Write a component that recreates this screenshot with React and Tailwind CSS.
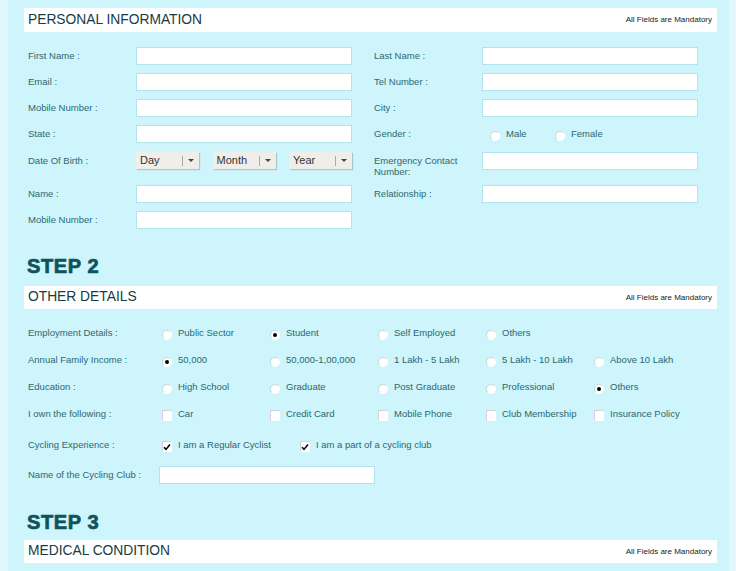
const leftFields = [
  'First Name :',
  'Email :',
  'Mobile Number :',
  'State :',
]
const rightFields = ['Last Name :', 'Tel Number :', 'City :']

function Header({ title, className = 'h-[23px]' }) {
  return (
    <div className={`flex items-center justify-between bg-white pl-[4px] pr-[5px] ${className}`}>
      <span className="text-[13.8px] text-[#173c44]">{title}</span>
      <span className="text-[8px] text-[#222]">All Fields are Mandatory</span>
    </div>
  )
}

function Step({ n, className }) {
  return (
    <div
      className={`h-[24px] pl-[3px] text-[20px] leading-[24px] font-bold tracking-[0.6px] text-[#0f5361] [-webkit-text-stroke:0.7px_#0f5361] ${className}`}
    >
      STEP {n}
    </div>
  )
}

function Input({ className = 'w-[216px]' }) {
  return <div className={`h-[18px] border border-[#b4e3eb] bg-white ${className}`} />
}

function Label({ children, className = 'w-[108px]' }) {
  return <div className={`shrink-0 text-[9.5px] leading-[18px] text-[#2f6870] ${className}`}>{children}</div>
}

function Radio({ checked }) {
  return (
    <span className="relative mt-[3px] flex h-[10px] w-[10px] shrink-0 items-center justify-center rounded-full border border-[#d4d4d4] border-r-white border-b-white bg-white">
      {checked && <span className="h-[4px] w-[4px] rounded-full bg-black" />}
    </span>
  )
}

function Check({ checked }) {
  return (
    <span className="mt-[3px] flex h-[11px] w-[10px] shrink-0 items-center justify-center border border-[#d2d2d2] border-r-white border-b-white bg-white">
      {checked && (
        <svg width="8" height="8" viewBox="0 0 8 8">
          <path d="M1 4.2 L3 6.4 L7 1.6" fill="none" stroke="#000" strokeWidth="1.6" />
        </svg>
      )}
    </span>
  )
}

function Option({ label, checked, box, className = 'w-[108px]' }) {
  return (
    <div className={`flex items-center gap-[6px] ${className}`}>
      {box ? <Check checked={checked} /> : <Radio checked={checked} />}
      <span className="text-[9.5px] text-[#2b6870]">{label}</span>
    </div>
  )
}

function Select({ label }) {
  return (
    <div className="flex h-[17px] w-[63px] items-center bg-[#efeee8] shadow-[1px_1px_1px_rgba(0,0,0,0.18)]">
      <span className="w-[46px] pl-[4px] text-[11px] text-[#333]">{label}</span>
      <span className="h-[10px] w-px bg-[#a9a9a9]" />
      <span className="flex flex-1 justify-center">
        <span className="h-0 w-0 border-x-[3px] border-t-[3px] border-x-transparent border-t-[#444]" />
      </span>
    </div>
  )
}

function OptionRow({ label, options, checked, box, className = 'mt-[9px]' }) {
  return (
    <div className={`flex h-[18px] items-center ${className}`}>
      <Label className="w-[134px]">{label}</Label>
      {options.map((o, i) => (
        <Option key={o} label={o} checked={i === checked} box={box} />
      ))}
    </div>
  )
}

export default function App() {
  return (
    <div className="flex min-h-[571px] w-full bg-[#e1f8fb] font-['Liberation_Sans',Arial,sans-serif]">
      <div className="ml-[8px] w-[721px] bg-[#cdf5fb] pt-[8px] pr-[12px] pb-[20px] pl-[16px]">
        <Header title="PERSONAL INFORMATION" className="h-[24px]" />

        <div className="pl-[4px]">
          {leftFields.map((f, i) => (
            <div key={f} className={`flex h-[18px] ${i === 0 ? 'mt-[15px]' : 'mt-[8px]'}`}>
              <Label>{f}</Label>
              <Input />
              <div className="w-[22px]" />
              <Label>{rightFields[i] ?? 'Gender :'}</Label>
              {rightFields[i] ? (
                <Input />
              ) : (
                <div className="flex items-center pl-[8px]">
                  <Option label="Male" className="w-[65px]" />
                  <Option label="Female" className="w-[80px]" />
                </div>
              )}
            </div>
          ))}

          <div className="mt-[9px] flex h-[25px] items-start">
            <Label>Date Of Birth :</Label>
            <div className="flex w-[216px] justify-between">
              <Select label="Day" />
              <Select label="Month" />
              <Select label="Year" />
            </div>
            <div className="w-[22px]" />
            <div className="w-[108px] shrink-0 pt-[3px] text-[9.5px] leading-[11px] text-[#2f6870]">
              Emergency Contact
              <br />
              Number:
            </div>
            <Input />
          </div>

          <div className="mt-[8px] flex h-[18px]">
            <Label>Name :</Label>
            <Input />
            <div className="w-[22px]" />
            <Label>Relationship :</Label>
            <Input />
          </div>

          <div className="mt-[8px] flex h-[18px]">
            <Label>Mobile Number :</Label>
            <Input />
          </div>
        </div>

        <Step n={2} className="mt-[25px]" />
        <div className="mt-[8px]">
          <Header title="OTHER DETAILS" />
        </div>

        <div className="pl-[4px]">
          <OptionRow
            className="mt-[15px]"
            label="Employment Details :"
            options={['Public Sector', 'Student', 'Self Employed', 'Others']}
            checked={1}
          />
          <OptionRow
            label="Annual Family Income :"
            options={['50,000', '50,000-1,00,000', '1 Lakh - 5 Lakh', '5 Lakh - 10 Lakh', 'Above 10 Lakh']}
            checked={0}
          />
          <OptionRow
            label="Education :"
            options={['High School', 'Graduate', 'Post Graduate', 'Professional', 'Others']}
            checked={4}
          />
          <OptionRow
            label="I own the following :"
            options={['Car', 'Credit Card', 'Mobile Phone', 'Club Membership', 'Insurance Policy']}
            checked={-1}
            box
          />

          <div className="mt-[13px] flex h-[18px] items-center">
            <Label className="w-[134px]">Cycling Experience :</Label>
            <Option label="I am a Regular Cyclist" checked box className="w-[138px]" />
            <Option label="I am a part of a cycling club" checked box className="w-[160px]" />
          </div>

          <div className="mt-[12px] flex h-[18px] items-center">
            <Label className="w-[131px]">Name of the Cycling Club :</Label>
            <Input />
          </div>
        </div>

        <Step n={3} className="mt-[26px]" />
        <div className="mt-[6px]">
          <Header title="MEDICAL CONDITION" />
        </div>
      </div>
    </div>
  )
}
